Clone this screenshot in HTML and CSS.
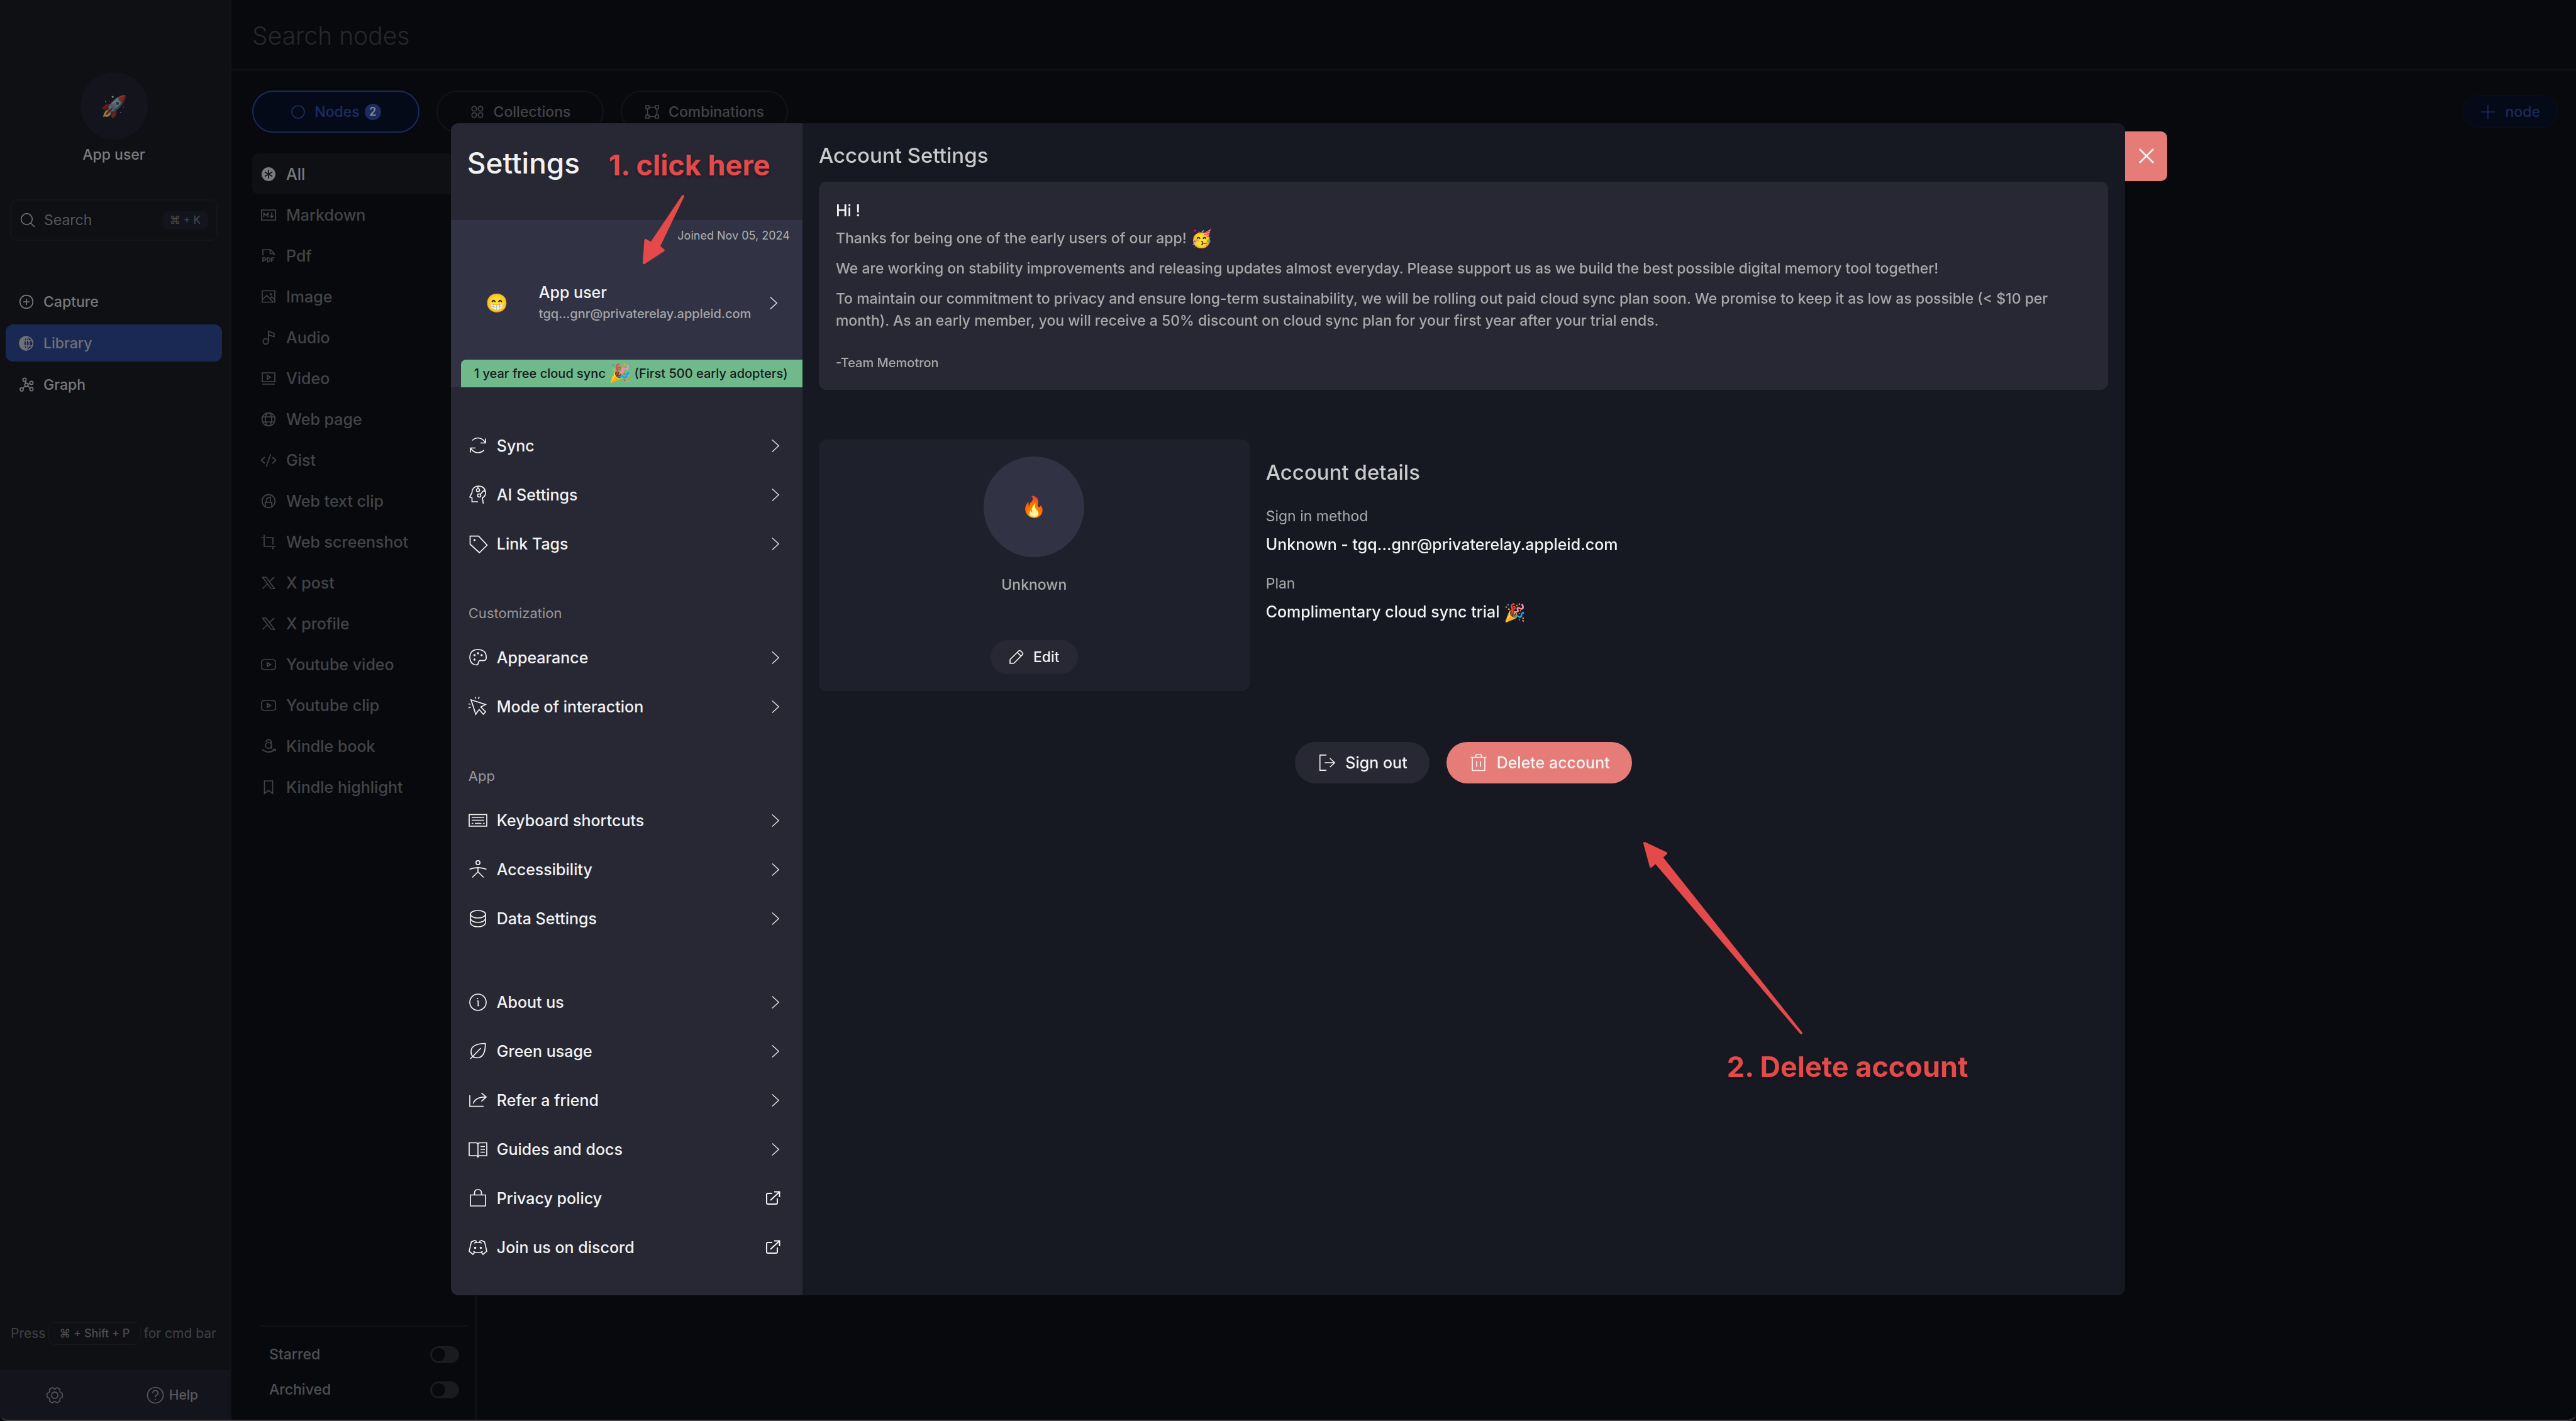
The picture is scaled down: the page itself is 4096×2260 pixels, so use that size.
FILE: index.html
```html
<!DOCTYPE html>
<html lang="en">
<head>
<meta charset="utf-8">
<title>Memotron - Account Settings</title>
<link rel="stylesheet" href="styles.css">
</head>
<body>
<svg class="sprite" aria-hidden="true">
  <symbol id="i-chevron" viewBox="0 0 14 24"><path d="M1 1l12 11L1 23"/></symbol>
  <symbol id="i-external" viewBox="0 0 24 24"><path d="M11 4H4a2 2 0 0 0-2 2v13a2 2 0 0 0 2 2h13a2 2 0 0 0 2-2v-7M8 15L22 2M14 1.500h8.500V10"/></symbol>
  <symbol id="i-x" viewBox="0 0 24 24"><path d="M2.500 3H8l13.500 18H16zM2.500 21l8-7.500M21 3l-7.500 6.800"/></symbol>
  <symbol id="i-youtube" viewBox="0 0 24 24"><path d="M3.500 4.500Q12 3 20.500 4.500 23 5 23 8v8q0 3-2.500 3.500Q12 21 3.500 19.500 1 19 1 16V8q0-3 2.500-3.500zM10 9l5.500 3-5.500 3z"/></symbol>
  <symbol id="i-logout" viewBox="0 0 30 30"><path d="M14 2H3v26h11M11 15h17M20 7.500l8 7.500-8 7.500"/></symbol>
</svg>

<div class="app">
  <aside class="sidebar">
    <div class="user">
      <div class="user-avatar"><span class="emoji-dim">🚀</span></div>
      <div class="user-name">App user</div>
    </div>
    <button class="quick-search" type="button">
      <svg class="icon24" viewBox="0 0 24 24"><circle cx="10.500" cy="10.500" r="8.800"/><path d="M17 17l6 6"/></svg>
      <span>Search</span>
      <kbd>⌘ + K</kbd>
    </button>
    <nav class="side-nav">
      <a href="#capture"><svg class="icon24" viewBox="0 0 24 24"><circle cx="12" cy="12" r="10.300"/><path d="M12 7v10M7 12h10"/></svg>Capture</a>
      <a href="#library" class="active"><svg class="icon24" viewBox="0 0 24 24"><path class="fill" d="M12 1a11 11 0 0 0 0 22C6.500 17 6.500 7 12 1z"/><circle cx="12" cy="12" r="10.300"/><path d="M12 2c6 6 6 14 0 20M8 8h13M8 16h13M12 2v20"/></svg>Library</a>
      <a href="#graph"><svg class="icon24" viewBox="0 0 24 24"><circle cx="12" cy="12" r="2.600"/><circle cx="9" cy="4" r="2.600"/><circle cx="20" cy="9" r="2.600"/><circle cx="4.500" cy="19.500" r="2.600"/><circle cx="20" cy="19" r="2.600"/><path d="M11 9.500L10 6.500M14.500 11.300l3-1.300M10 14l-3.500 3.500M14 13.700l4 3.600"/></svg>Graph</a>
    </nav>
    <p class="hint">Press <kbd>⌘ + Shift + P</kbd> for cmd bar</p>
    <div class="side-footer">
      <button type="button" aria-label="Settings"><svg class="icon28" viewBox="0 0 30 30"><circle cx="15" cy="15" r="5.500"/><path d="M11 2l4 2.500L19 2l4.500 2.600.5 4.900 4 2.500v6l-4 2.500-.5 4.900L19 28l-4-2.500L11 28l-4.500-2.600L6 20.500 2 18v-6l4-2.500.5-4.900z"/></svg></button>
      <button type="button"><svg class="icon28" viewBox="0 0 28 28"><circle cx="14" cy="14" r="12.500"/><path d="M9.800 10.500q0-4 4.200-4t4.200 4q0 2.500-2.500 3.500-1.700.8-1.700 3.200"/><path d="M14 20v2"/></svg>Help</button>
    </div>
  </aside>

  <main class="main">
    <header class="topbar"><input type="text" placeholder="Search nodes" aria-label="Search nodes"></header>
    <div class="tabs">
      <button class="tab selected" type="button"><svg class="icon24" viewBox="0 0 24 24"><circle cx="12" cy="12" r="10"/></svg>Nodes<span class="count">2</span></button>
      <button class="tab" type="button"><svg class="icon24" viewBox="0 0 24 24"><circle cx="7" cy="7" r="3.700"/><circle cx="17" cy="7" r="3.700"/><circle cx="7" cy="17" r="3.700"/><circle cx="17" cy="17" r="3.700"/></svg>Collections</button>
      <button class="tab" type="button"><svg class="icon24" viewBox="0 0 24 24"><path d="M2 2h5v5H2zM17 2h5v5h-5zM2 17h5v5H2zM17 17h5v5h-5zM7 4.500h10M7 19.500h10M4.500 7v10M19.500 7v10"/></svg>Combinations</button>
      <button class="add-node" type="button"><svg class="icon24" viewBox="0 0 24 24"><path d="M12 1v22M1 12h22"/></svg>node</button>
    </div>
    <section class="filters">
      <ul class="types">
        <li class="active"><svg class="icon24" viewBox="0 0 24 24"><circle class="disc" cx="12" cy="12" r="11"/><path class="cut" d="M12 5v14M6 8.500l12 7M18 8.500l-12 7"/></svg>All</li>
        <li><svg class="icon24" viewBox="0 0 24 24"><path d="M.8 4h22.400v16H.8zM4.500 15.500V9l3.300 3.500L11 9v6.500M17 8v8M14 12.800l3 3 3-3"/></svg>Markdown</li>
        <li><svg class="icon24" viewBox="0 0 24 24"><path d="M3 11V2h12l6 6v3M14.500 2v6.500H21M3 22v-7h3q1.500 0 1.500 2T6 19H3M10 15h1.500q3 0 3 3.200T11.500 21.500H10zM17 22v-7h4.500M17 18.500h3.500"/></svg>Pdf</li>
        <li><svg class="icon24" viewBox="0 0 24 24"><path d="M2 2.500h20v18H2zM2 17l7-7 10.500 10.500M14 15l3-3 5 5"/><circle cx="15.500" cy="8" r="1"/></svg>Image</li>
        <li><svg class="icon24" viewBox="0 0 24 24"><circle cx="7.500" cy="18" r="4.300"/><path d="M11.800 18V2l9 3v5.500l-9-3"/></svg>Audio</li>
        <li><svg class="icon24" viewBox="0 0 24 24"><path d="M2 3h20v14H2zM2 21h20M10 6.800l5 3.200-5 3.200z"/></svg>Video</li>
        <li><svg class="icon24" viewBox="0 0 24 24"><circle cx="12" cy="12" r="10.300"/><ellipse cx="12" cy="12" rx="5" ry="10.300"/><path d="M2.500 8h19M2.500 16h19"/></svg>Web page</li>
        <li><svg class="icon24" viewBox="0 0 24 24"><path d="M6 7l-5.500 5L6 17M18 7l5.500 5L18 17M15.500 2L8.500 22"/></svg>Gist</li>
        <li><svg class="icon24" viewBox="0 0 24 24"><circle cx="12" cy="12" r="10.300"/><path d="M7 20.500V14h10v6.500M9 14V8l6-2.500V14"/></svg>Web text clip</li>
        <li><svg class="icon24" viewBox="0 0 24 24"><path d="M.5 5h3M5 .5V19h18.500M8 5h11v11M19 20v3.500"/></svg>Web screenshot</li>
        <li><svg class="icon24"><use href="#i-x"/></svg>X post</li>
        <li><svg class="icon24"><use href="#i-x"/></svg>X profile</li>
        <li><svg class="icon24"><use href="#i-youtube"/></svg>Youtube video</li>
        <li><svg class="icon24"><use href="#i-youtube"/></svg>Youtube clip</li>
        <li><svg class="icon24" viewBox="0 0 24 24"><path d="M8 5q.5-3.500 4-3.500 4.500 0 4.500 4V16M16.500 11a4.700 4.700 0 1 1-1-3.500l1 1.500M2 17q10 8 19.500.5M18.500 16.500H23V20"/></svg>Kindle book</li>
        <li><svg class="icon24" viewBox="0 0 24 24"><path d="M5.500 2h13v20L12 17l-6.500 5z"/></svg>Kindle highlight</li>
      </ul>
      <div class="switches">
        <label>Starred<input type="checkbox"></label>
        <label>Archived<input type="checkbox"></label>
      </div>
    </section>
  </main>
</div>

<div class="overlay">
  <div class="dialog" role="dialog" aria-label="Settings">
    <aside class="settings">
      <h1>Settings</h1>
      <section class="profile">
        <div class="joined">Joined Nov 05, 2024</div>
        <button class="profile-row" type="button">
          <span class="face">😁</span>
          <span class="who"><strong>App user</strong><small>tgq...gnr@privaterelay.appleid.com</small></span>
          <svg class="chevron"><use href="#i-chevron"/></svg>
        </button>
        <div class="banner">1 year free cloud sync <span class="emoji">🎉</span> (First 500 early adopters)</div>
      </section>
      <nav class="menu">
        <div class="group">
          <button type="button"><svg class="icon30" viewBox="0 0 30 30"><path d="M6 6.500Q10 2.500 15 2.500 22 2.500 27 10M27 3.500V10.500H19M24.500 22Q20 26 15 26 8 26 3 18.500M3 25.500v-7h8"/></svg>Sync<svg class="chevron"><use href="#i-chevron"/></svg></button>
          <button type="button"><svg class="icon30" viewBox="0 0 30 30"><path d="M23.500 29L22 20q5.500-3.500 5-8.500Q26 1 15.500 1.200 5.500 2 5.500 11.500L2 18.500l3.500 1.300V26h9.500M15 1.500v3.500M18.800 14.300l4.700-5.600 4 1"/><circle cx="15" cy="7.500" r="2.500"/><circle cx="17" cy="16" r="2.500"/></svg>AI Settings<svg class="chevron"><use href="#i-chevron"/></svg></button>
          <button type="button"><svg class="icon30" viewBox="0 0 30 30"><path d="M2.500 2.700H16L29.500 17 17.300 29 2.500 15.500z"/><circle class="fill" cx="9.500" cy="9" r=".8"/></svg>Link Tags<svg class="chevron"><use href="#i-chevron"/></svg></button>
        </div>
        <h2>Customization</h2>
        <div class="group">
          <button type="button"><svg class="icon30" viewBox="0 0 30 30"><path d="M28 16.500Q29.500 3 15.500 2 2.500 2 2 14.500 2.500 25.500 12 26.500q3 0 3.500-3 .5-4.500 5-4 6.500 1 7.500-3z"/><g class="fill"><circle cx="9.500" cy="11" r=".9"/><circle cx="15" cy="8" r=".9"/><circle cx="20.800" cy="11" r=".9"/><circle cx="9.500" cy="18" r=".9"/></g></svg>Appearance<svg class="chevron"><use href="#i-chevron"/></svg></button>
          <button type="button"><svg class="icon30" viewBox="0 0 30 30"><path d="M4 4l23 7.500-7.500 4 7.500 7.500-3.500 4L17 19.500l-2.500 3L11.500 27zM0 10.500l3 .5M0 17l3.500-1.500M10.500-.5l1 2.500M15.500 2.500L17-.5"/></svg>Mode of interaction<svg class="chevron"><use href="#i-chevron"/></svg></button>
        </div>
        <h2>App</h2>
        <div class="group">
          <button type="button"><svg class="icon30" viewBox="0 0 30 30"><path d="M1 5.500h28V24H1zM5 10h20M5 14.500h20M5 19.500h2.500M10 19.500h10.500M23 19.500h2.500"/></svg>Keyboard shortcuts<svg class="chevron"><use href="#i-chevron"/></svg></button>
          <button type="button"><svg class="icon30" viewBox="0 0 30 30"><circle cx="15" cy="4" r="3.200"/><path d="M1.500 14.500Q8 12 15 11.800q7 .2 13.500 2.700M15 12v6.500L6 27.500M15 18.500l9 9"/></svg>Accessibility<svg class="chevron"><use href="#i-chevron"/></svg></button>
          <button type="button"><svg class="icon30" viewBox="0 0 30 30"><ellipse cx="15" cy="8" rx="12" ry="6"/><path d="M3 8v14q2 6 12 6t12-6V8M3 15q2 6 12 6t12-6"/></svg>Data Settings<svg class="chevron"><use href="#i-chevron"/></svg></button>
        </div>
        <div class="group about">
          <button type="button"><svg class="icon30" viewBox="0 0 30 30"><circle cx="15" cy="15" r="13"/><path d="M13.500 13h1.800v7.500h1.700M14.300 8v2"/></svg>About us<svg class="chevron"><use href="#i-chevron"/></svg></button>
          <button type="button"><svg class="icon30" viewBox="0 0 30 30"><path d="M26.700 2.500Q4 3 4 15.500q0 10 9.500 10Q27 25 26.700 2.500zM3 27L19.500 10"/></svg>Green usage<svg class="chevron"><use href="#i-chevron"/></svg></button>
          <button type="button"><svg class="icon30" viewBox="0 0 30 30"><path d="M2 7v17.500h22M7.500 20Q11 9.700 28 9.700M20.500 3.300L28 9.700l-7.500 7"/></svg>Refer a friend<svg class="chevron"><use href="#i-chevron"/></svg></button>
          <button type="button"><svg class="icon30" viewBox="0 0 30 30"><path d="M15 28q0-3-3-3H1V4.500h11q3 0 3 3 0-3 3-3h11V25H18q-3 0-3 3V7.500M19 10.500h7M19 15h7M19 19.500h7"/></svg>Guides and docs<svg class="chevron"><use href="#i-chevron"/></svg></button>
          <a href="#privacy"><svg class="icon30" viewBox="0 0 30 30"><path d="M3 9.500h24v17.500H3zM9.500 9.500V6q0-5 5.500-5t5.500 5v3.500"/></svg>Privacy policy<svg class="external"><use href="#i-external"/></svg></a>
          <a href="#discord"><svg class="icon30" viewBox="0 0 30 30"><path d="M12 7V5L9.500 4 4.500 6 1 21l6 5 3-3.500M18 7V5l2.500-1 5 2L29 21l-6 5-3-3.500M9 8q6-2 12 0M7.500 21.500q7.500 3.500 15 0"/><g class="fill"><circle cx="10.500" cy="15.500" r="1"/><circle cx="19.500" cy="15.500" r="1"/></g></svg>Join us on discord<svg class="external"><use href="#i-external"/></svg></a>
        </div>
      </nav>
    </aside>

    <section class="content">
      <h2 class="title">Account Settings</h2>
      <article class="letter">
        <h3>Hi !</h3>
        <p class="lead">Thanks for being one of the early users of our app! <span class="emoji">🥳</span></p>
        <p>We are working on stability improvements and releasing updates almost everyday. Please support us as we build the best possible digital memory tool together!</p>
        <p>To maintain our commitment to privacy and ensure long-term sustainability, we will be rolling out paid cloud sync plan soon. We promise to keep it as low as possible (&lt; $10 per month). As an early member, you will receive a 50% discount on cloud sync plan for your first year after your trial ends.</p>
        <footer>-Team Memotron</footer>
      </article>
      <div class="account">
        <div class="id-card">
          <div class="id-avatar">🔥</div>
          <div class="id-name">Unknown</div>
          <button class="edit" type="button"><svg class="icon24" viewBox="0 0 24 24"><path d="M2 22v-6L16 2q1-1 2.500 0L22 5.500q1 1.500 0 2.500L8 22zM13.500 4.500l6 6"/></svg>Edit</button>
        </div>
        <div class="details">
          <h2 class="title">Account details</h2>
          <dl>
            <dt>Sign in method</dt><dd>Unknown - tgq...gnr@privaterelay.appleid.com</dd>
            <dt>Plan</dt><dd>Complimentary cloud sync trial <span class="emoji">🎉</span></dd>
          </dl>
        </div>
      </div>
      <div class="actions">
        <button class="sign-out" type="button"><svg class="icon28"><use href="#i-logout"/></svg>Sign out</button>
        <button class="delete" type="button"><svg class="icon28" viewBox="0 0 28 28"><path d="M1.500 5.500h25M4 5.500V26.500h20V5.500M9.500 5.500V3q0-2 2-2h5q2 0 2 2v2.500M11 11.500v9M17 11.500v9"/></svg>Delete account</button>
      </div>
    </section>

    <button class="close" type="button" aria-label="Close"><svg viewBox="0 0 26 26"><path d="M1 1l24 24M25 1L1 25"/></svg></button>

    <span class="note note-1">1. click here</span>
    <svg class="arrow arrow-1" viewBox="0 0 72 116"><path d="M68 5L29.500 85l7.200 6L6 111l2.500-36 9 5z"/></svg>
    <svg class="arrow arrow-2" viewBox="0 0 260 312"><path d="M6 5l34 16-7 6.500L255 307 23.500 35.500 16 42z"/></svg>
    <span class="note note-2">2. Delete account</span>
  </div>
</div>
</body>
</html>
```

FILE: styles.css
```css
* { box-sizing: border-box; }

body {
  margin: 0;
  background: #08090d;
  font-family: Inter, "Liberation Sans", sans-serif;
  font-size: 25px;
  font-weight: 500;
  line-height: 34px;
  color: #f2f2f2;
}

h1, h2, h3, p, ul, dl, dd { margin: 0; padding: 0; font-weight: inherit; }
ul { list-style: none; }
a { color: inherit; text-decoration: none; }
button, input, kbd { font: inherit; color: inherit; }
button { display: flex; align-items: center; padding: 0; border: 0; background: none; text-align: left; }

svg { flex: none; fill: none; stroke: currentColor; stroke-width: 1.7; overflow: visible; }
.fill { fill: currentColor; }
.sprite { display: none; }
.icon24 { width: 24px; height: 24px; }
.icon28 { width: 28px; height: 28px; }
.icon30 { width: 30px; height: 30px; }
.emoji { font-size: 28px; line-height: 1; vertical-align: -2px; }

/* App shell */
.app {
  display: flex;
  height: 100vh;
  border-bottom: 2px solid #454347;
  border-radius: 0 0 12px 12px;
  overflow: hidden;
}

.sidebar {
  display: flex;
  flex-direction: column;
  flex: 0 0 368px;
  padding: 115px 13px 0 9px;
  border-right: 2px solid #121318;
  background: #0f1014;
  color: #78787a;
  font-size: 23px;
}
.user { display: flex; flex-direction: column; align-items: center; gap: 7px; }
.user-avatar {
  display: grid;
  place-items: center;
  width: 107px;
  height: 107px;
  border-radius: 50%;
  background: #14151c;
  font-size: 34px;
}
.emoji-dim { opacity: .5; }
.user-name { color: #7c7c7d; }
.quick-search {
  gap: 14px;
  margin: 54px 7px 0;
  height: 66px;
  padding: 0 13px 0 14px;
  border: 2px solid #14151b;
  border-radius: 10px;
  color: #555658;
  font-weight: 400;
}
.quick-search svg { color: #717173; }
.quick-search kbd {
  margin-left: auto;
  padding: 0 12px;
  border-radius: 11px;
  background: #14151c;
  color: #4a4b4e;
  font-size: 17px;
  line-height: 29px;
}
.side-nav { display: flex; flex-direction: column; gap: 7px; margin-top: 67px; }
.side-nav a { display: flex; align-items: center; gap: 15px; height: 59px; padding-left: 21px; border-radius: 12px; }
.side-nav .active { background: #1a2954; color: #707177; }
.hint {
  display: flex;
  align-items: center;
  justify-content: space-between;
  margin: auto 9px 40px 8px;
  font-size: 21px;
  font-weight: 400;
  color: #404144;
}
.hint kbd {
  padding: 0 17px;
  border: 1px solid #17181d;
  border-radius: 10px;
  font-size: 18px;
  font-weight: 500;
  line-height: 34px;
  color: #4b4c4e;
}
.side-footer {
  display: flex;
  align-items: center;
  justify-content: space-between;
  height: 79px;
  margin: 0 -13px 0 -9px;
  padding: 0 51px 0 73px;
  background: #14151c;
  color: #57585c;
  font-size: 21px;
}
.side-footer button { gap: 8px; }

.main { display: flex; flex-direction: column; flex: 1; }
.topbar { padding: 28px 33px 26px; border-bottom: 2px solid #101116; }
.topbar input {
  width: 100%;
  height: 56px;
  padding: 0;
  border: 0;
  background: none;
  font-size: 39px;
  font-weight: 300;
}
.topbar input::placeholder { color: #27282a; opacity: 1; }
.tabs { display: flex; align-items: center; gap: 27px; padding: 32px 28px 33px 33px; }
.tab {
  justify-content: center;
  gap: 14px;
  width: 266px;
  height: 67px;
  border: 2px solid #121318;
  border-radius: 34px;
  color: #434447;
  font-size: 23px;
}
.tab.selected { border-color: #1b2b5a; background: #040a18; color: #1d2d61; }
.count {
  width: 26px;
  margin-left: -6px;
  border-radius: 50%;
  background: #1c2c5e;
  color: #85868c;
  font-size: 18px;
  font-weight: 600;
  line-height: 26px;
  text-align: center;
}
.add-node {
  gap: 16px;
  height: 53px;
  margin-left: auto;
  padding: 0 27px;
  border: 2px solid #070d1d;
  border-radius: 27px;
  background: #040a18;
  color: #1b2b5a;
  font-size: 23px;
}
.filters {
  display: flex;
  flex-direction: column;
  justify-content: space-between;
  flex: 1;
  width: 390px;
  padding: 0 13px 20px 33px;
  border-right: 2px solid #101116;
  color: #434446;
}
.types li { display: flex; align-items: center; gap: 16px; height: 65px; padding-left: 14px; border-radius: 10px; }
.types .active { background: #0f1014; color: #7a7a7b; }
.types .disc { fill: currentColor; stroke: none; }
.types .cut { stroke: #0f1014; }
.switches { margin-left: 13px; padding-top: 16px; border-top: 2px solid #101116; font-size: 23px; color: #4f5052; }
.switches label { display: flex; align-items: center; justify-content: space-between; height: 56px; padding: 0 13px 0 14px; }
.switches input {
  appearance: none;
  width: 46px;
  height: 27px;
  margin: 0;
  padding: 3px;
  border-radius: 14px;
  background: #1a1b1f;
}
.switches input::before { content: ""; display: block; width: 21px; height: 21px; border-radius: 50%; background: #08090d; }

/* Settings dialog */
.overlay { position: fixed; inset: 0; display: flex; align-items: center; justify-content: center; padding-bottom: 5px; }
.dialog {
  position: relative;
  display: flex;
  width: 65%;
  border-radius: 12px;
  background: #171922;
}
.settings { flex: 0 0 21%; padding-bottom: 37px; border-radius: 12px 0 0 12px; background: #272834; }
.settings h1 { padding: 35px 26px 63px; font-size: 46px; line-height: 56px; }
.profile { padding-top: 13px; background: #313344; }
.joined { padding-right: 20px; text-align: right; font-size: 18px; font-weight: 400; line-height: 24px; color: #b0b0b2; }
.profile-row { width: 100%; gap: 27px; margin-top: 61px; padding: 0 40px 0 33px; }
.face { width: 80px; font-size: 29px; text-align: center; }
.who { display: flex; flex-direction: column; }
.who strong { font-weight: 500; }
.who small { font-size: 20px; color: #a6a6a8; }
.chevron { width: 12px; height: 22px; margin-left: auto; color: #e0e0e2; }
.external { width: 24px; height: 24px; margin-left: auto; margin-right: -2px; stroke-width: 2; }
.banner {
  height: 44px;
  margin: 56px 0 0 16px;
  padding-left: 21px;
  border-radius: 8px 0 0 0;
  background: #70b98a;
  color: #171922;
  font-size: 20px;
  line-height: 44px;
  white-space: nowrap;
}
.menu { padding: 54px 37px 0 28px; }
.menu button, .menu a { display: flex; align-items: center; gap: 15px; width: 100%; height: 78px; }
.menu h2 { margin: 57px 0 18px; font-size: 22px; font-weight: 400; line-height: 28px; color: #97979a; }
.about { margin-top: 55px; }

.content { flex: 1; min-width: 0; padding: 31px 27px 31px 26px; }
.title { font-size: 33px; line-height: 40px; color: #cacaca; }
.letter {
  margin-top: 22px;
  padding: 29px 27px;
  border-radius: 12px;
  background: #272834;
  color: #a9a9aa;
  font-size: 23px;
  line-height: 35px;
}
.letter h3 { font-size: 25px; line-height: 34px; color: #f2f2f2; }
.letter p { margin-top: 13px; }
.letter .lead { height: 35px; margin-top: 10px; }
.letter footer { margin-top: 35px; font-size: 20px; line-height: 28px; }
.account { display: flex; gap: 26px; margin-top: 79px; }
.id-card {
  display: flex;
  flex-direction: column;
  align-items: center;
  flex: 0 0 33.4%;
  padding: 27px;
  border-radius: 12px;
  background: #1e202b;
}
.id-avatar {
  display: grid;
  place-items: center;
  width: 160px;
  height: 160px;
  border-radius: 50%;
  background: #313344;
  font-size: 32px;
}
.id-name { margin-top: 29px; font-size: 23px; line-height: 30px; color: #a9a9aa; }
.edit { gap: 15px; height: 54px; margin-top: 73px; padding: 0 29px; border-radius: 27px; background: #272834; font-size: 23px; }
.details { padding-top: 32px; }
.details dt { margin-top: 30px; font-size: 23px; font-weight: 400; line-height: 30px; color: #a9a9aa; }
.details dt:first-child { margin-top: 35px; }
.details dd { height: 34px; margin-top: 13px; }
.actions { display: flex; justify-content: center; gap: 27px; margin-top: 81px; }
.actions button { gap: 15px; height: 66px; padding: 0 35px 0 37px; border-radius: 33px; }
.sign-out { background: #272834; }
.delete { background: #e57c77; }

.close {
  position: absolute;
  left: 100%;
  top: 13px;
  justify-content: center;
  width: 67px;
  height: 79px;
  border-radius: 0 10px 10px 0;
  background: #e57c77;
}
.close svg { width: 24px; height: 24px; stroke-width: 3; }

/* Tutorial callouts over the dialog */
.note {
  position: absolute;
  color: #e54a4a;
  font-size: 45px;
  font-weight: 700;
  line-height: 56px;
  text-shadow: 0 2px 4px rgba(0, 0, 0, .3);
  white-space: nowrap;
}
.arrow { position: absolute; fill: #e54a4a; stroke: #e54a4a; stroke-width: 4; stroke-linejoin: round; }
.note-1 { left: 251px; top: 39px; }
.arrow-1 { left: 301px; top: 111px; width: 72px; height: 116px; }
.arrow-2 { left: 1892px; top: 1140px; width: 260px; height: 312px; }
.note-2 { left: 2029px; top: 1473px; }
```
